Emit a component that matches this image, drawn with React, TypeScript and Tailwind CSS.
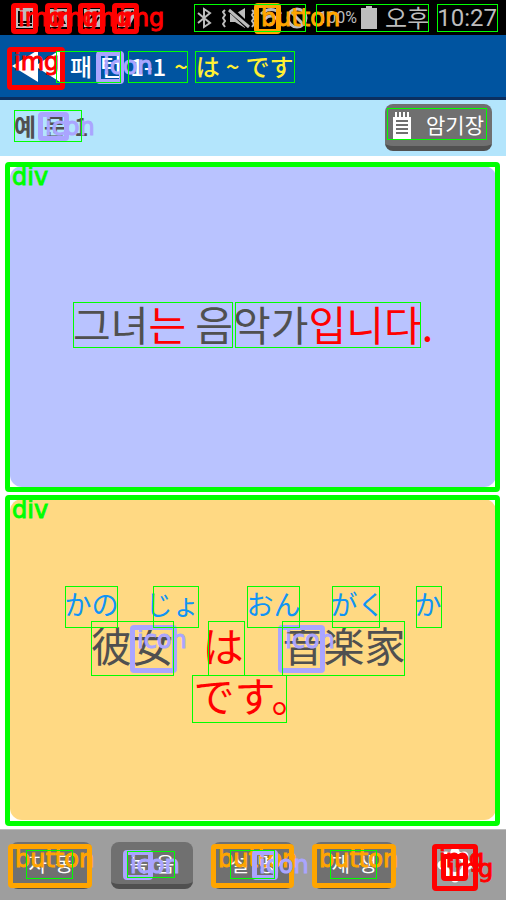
import type { ReactNode } from "react";

type Box = { x: number; y: number; w: number; h: number };
type Kind = "img" | "icon" | "button" | "div";

const MARKS: (Box & { kind: Kind })[] = [
  { kind: "div", x: 5, y: 162, w: 495, h: 330 },
  { kind: "div", x: 5, y: 495, w: 495, h: 331 },
  { kind: "button", x: 254, y: 3, w: 27, h: 31 },
  { kind: "button", x: 8, y: 844, w: 84, h: 44 },
  { kind: "button", x: 211, y: 844, w: 83, h: 44 },
  { kind: "button", x: 312, y: 844, w: 84, h: 44 },
  { kind: "img", x: 11, y: 3, w: 27, h: 31 },
  { kind: "img", x: 45, y: 3, w: 27, h: 31 },
  { kind: "img", x: 78, y: 3, w: 27, h: 31 },
  { kind: "img", x: 112, y: 3, w: 27, h: 31 },
  { kind: "img", x: 7, y: 47, w: 58, h: 43 },
  { kind: "img", x: 432, y: 844, w: 46, h: 47 },
  { kind: "img", x: 441, y: 854, w: 27, h: 27 },
  { kind: "icon", x: 96, y: 51, w: 28, h: 33 },
  { kind: "icon", x: 38, y: 112, w: 31, h: 29 },
  { kind: "icon", x: 130, y: 625, w: 47, h: 48 },
  { kind: "icon", x: 278, y: 625, w: 47, h: 48 },
  { kind: "icon", x: 123, y: 850, w: 30, h: 30 },
  { kind: "icon", x: 252, y: 850, w: 26, h: 30 },
];

const TEXT_BOUNDS: [number, number, number, number][] = [
  [194, 4, 306, 32], [316, 4, 429, 32], [437, 4, 498, 32],
  [56, 51, 121, 83], [128, 51, 188, 83], [195, 51, 295, 83],
  [14, 110, 82, 142], [387, 108, 487, 140],
  [73, 302, 233, 348], [235, 302, 421, 348],
  [65, 586, 118, 628], [153, 586, 199, 628], [247, 586, 300, 628],
  [332, 586, 380, 628], [416, 586, 442, 628],
  [91, 621, 174, 676], [208, 621, 245, 676], [282, 621, 405, 676],
  [192, 675, 287, 723],
  [26, 850, 73, 879], [127, 851, 175, 878], [230, 850, 275, 879], [330, 850, 377, 879],
];

const MARK_STYLE: Record<Kind, string> = {
  img: "border-[#ff0000] text-[#ff0000]",
  icon: "border-[#aaa5ff] text-[#aaa5ff]",
  button: "border-[#ffa500] text-[#ffa500]",
  div: "border-[#00ff00] text-[#00ff00]",
};

function Annotations() {
  return (
    <div className="pointer-events-none absolute inset-0 overflow-hidden">
      {MARKS.map((m, i) => (
        <div
          key={i}
          className={`absolute rounded-[4px] border-5 ${MARK_STYLE[m.kind]}`}
          style={{ left: m.x, top: m.y, width: m.w, height: m.h }}
        >
          <span className="absolute top-0 left-0 pl-[2px] font-['DejaVu_Sans',sans-serif] text-2xl leading-5 [-webkit-text-stroke:1px_currentColor]">
            {m.kind}
          </span>
        </div>
      ))}
      {TEXT_BOUNDS.map(([l, t, r, b], i) => (
        <div
          key={i}
          className="absolute border border-[#00ff00]"
          style={{ left: l, top: t, width: r - l, height: b - t }}
        />
      ))}
    </div>
  );
}

function StatusBar() {
  return (
    <div className="flex h-[35px] items-center bg-black pr-[9px] pl-4 text-[#bdbdbd]">
      <div className="flex gap-4">
        <svg width="18" height="20" viewBox="0 0 18 20">
          <path fill="currentColor" d="M0 0h18v20H0z" />
          <path stroke="#000" strokeWidth="2" fill="none" d="M3 3v11h12V3M2 17h14" />
        </svg>
        <svg width="18" height="20" viewBox="0 0 18 20">
          <path fill="currentColor" d="M0 1h18v18H0z" />
          <path fill="#000" d="M2 16l5-8 4 5 2-3 3 6z" />
          <circle cx="13" cy="5" r="2" fill="#000" />
        </svg>
        <svg width="18" height="20" viewBox="0 0 18 20">
          <path fill="currentColor" d="M0 1h18v18H0z" />
          <path stroke="#000" strokeWidth="2" fill="none" d="M3 13L14 3M3 17h5M10 17l5-8" />
        </svg>
        <svg width="18" height="20" viewBox="0 0 18 20">
          <path fill="currentColor" d="M7 1h11v5l-7 13H0V9z" />
          <path stroke="#000" strokeWidth="2" fill="none" d="M4 14L15 3" />
        </svg>
      </div>
      <div className="ml-auto flex items-center">
        <svg width="15" height="22" viewBox="0 0 15 22" className="mr-[10px]" fill="none" stroke="currentColor" strokeWidth="2">
          <path d="M1 6l12 10-6 4V2l6 4L1 16" />
        </svg>
        <svg width="34" height="22" viewBox="0 0 34 22" className="mr-1" fill="none" stroke="currentColor" strokeWidth="2">
          <path fill="currentColor" stroke="none" d="M8 7h5l10-6v20l-10-6H8z" />
          <path stroke="#000" strokeWidth="6" d="M7 1l20 19" />
          <path strokeWidth="3" d="M7 3l20 17" />
          <path strokeWidth="2" d="M3 3l-2 2 2 3-2 3 2 3-2 3 2 3M30 3l2 2-2 3 2 3-2 3 2 3-2 3" />
        </svg>
        <svg width="22" height="22" viewBox="0 0 22 22" className="mr-1" fill="none" stroke="currentColor" strokeWidth="3">
          <path d="M1 7q10-9 20 0M5 12q6-6 12 0" />
          <circle cx="11" cy="17" r="2" fill="currentColor" stroke="none" />
        </svg>
        <svg width="22" height="22" viewBox="0 0 22 22" className="mr-[10px]" fill="none" stroke="currentColor" strokeWidth="3">
          <circle cx="11" cy="11" r="9" />
          <path d="M5 5l12 12" />
        </svg>
        <span className="mr-1 font-[Roboto,sans-serif] text-base">100%</span>
        <svg width="16" height="23" viewBox="0 0 16 23" className="mr-2" fill="currentColor">
          <path d="M5 0h6v2h5v21H0V2h5z" />
        </svg>
        <span className="mr-2 pb-[2px] text-2xl">오후</span>
        <span className="font-[Roboto,sans-serif] text-2xl">10:27</span>
      </div>
    </div>
  );
}

function PadButton({ children }: { children: ReactNode }) {
  return (
    <button className="flex h-[47px] w-[82px] justify-center gap-2 rounded-lg border-b-5 border-[#505050] bg-[#707070] pt-1 text-xl leading-9 text-white">
      {children}
    </button>
  );
}

const ACTIONS = [
  ["자", "동"],
  ["녹", "음"],
  ["설", "명"],
  ["재", "생"],
];

function Kana({ text }: { text: string[] }) {
  return (
    <span className="flex justify-between text-[27px] leading-[30px] text-[#1094f5]">
      {text.map((t) => (
        <span key={t}>{t}</span>
      ))}
    </span>
  );
}

export default function App() {
  return (
    <div className="relative flex min-h-screen flex-col bg-white font-['Noto_Sans_CJK_KR','Noto_Sans_CJK_JP',sans-serif]">
      <StatusBar />
      <header className="flex h-[65px] items-center border-b-3 border-[#0b2f60] bg-[#0054a0] pl-3 text-2xl font-medium text-white">
        <button aria-label="뒤로" className="mr-[10px]">
          <svg width="48" height="34" viewBox="0 0 48 34" fill="#fff">
            <path d="M0 17L26 1v14L48 1v32L26 19v14z" />
          </svg>
        </button>
        <h1 className="flex gap-2">
          <span>패</span>
          <span>턴</span>
          <span>1-1</span>
          <span className="flex gap-2 font-['Noto_Sans_CJK_JP',sans-serif] text-[#fff033]">
            <span>~</span>
            <span className="flex gap-[6px]">
              <span>は</span>
              <span>~</span>
              <span>です</span>
            </span>
          </span>
        </h1>
      </header>
      <div className="flex h-14 items-center justify-between bg-[#b3e5fc] pr-[14px] pb-px pl-[14px]">
        <h2 className="flex gap-2 pb-1 text-2xl font-bold text-[#505050]">
          <span>예</span>
          <span>문</span>
          <span>1</span>
        </h2>
        <button className="flex h-[47px] w-[107px] items-start rounded-lg border-b-5 border-[#505050] bg-[#707070] pt-1 pl-2 text-[21px] leading-8 text-white">
          <svg width="18" height="28" viewBox="0 0 18 28" className="mt-1 mr-[15px] shrink-0">
            <path fill="#fff" d="M0 5h18v22H0z" />
            <path stroke="#fff" strokeWidth="2" d="M3 0v6M7 0v6M11 0v6M15 0v6" />
            <path stroke="#707070" strokeWidth="2" d="M3 9h12M3 13h12M3 17h12M3 21h12" />
          </svg>
          암기장
        </button>
      </div>
      <main className="grid flex-1 auto-rows-fr gap-3 px-[10px] pt-[10px] pb-[9px]">
        <section className="flex items-center justify-center rounded-xl bg-[#b9c3ff] pb-2">
          <p className="text-[41px] leading-[60px] text-[#505050]">
            그녀<span className="text-[#ff0000]">는</span> 음악가
            <span className="text-[#ff0000]">입니다.</span>
          </p>
        </section>
        <section
          lang="ja"
          className="flex flex-col items-center justify-center rounded-xl bg-[#ffd983] pb-3 font-['Noto_Sans_CJK_JP',sans-serif] text-[41px] leading-[50px] text-[#505050]"
        >
          <div className="flex items-end">
            <div className="flex w-[135px] flex-col text-center">
              <Kana text={["かの", "じょ"]} />
              <span>彼女</span>
            </div>
            <span className="mx-[3px] text-[#ff0000]">は</span>
            <div className="flex w-[195px] flex-col text-center">
              <Kana text={["おん", "がく", "か"]} />
              <span>音楽家</span>
            </div>
          </div>
          <span className="text-[#ff0000]">です。</span>
        </section>
      </main>
      <footer className="flex h-[71px] items-center border-t border-[#bdbdbd] bg-[#9e9e9e] pr-7 pl-[10px]">
        <div className="flex gap-[19px]">
          {ACTIONS.map(([a, b]) => (
            <PadButton key={a}>
              <span>{a}</span>
              <span>{b}</span>
            </PadButton>
          ))}
        </div>
        <button aria-label="설정" className="ml-auto flex size-[46px] items-center justify-center">
          <svg width="36" height="36" viewBox="0 0 36 36">
            <circle cx="18" cy="18" r="14" fill="#fff" />
            <path stroke="#fff" strokeWidth="9" strokeLinecap="round" d="M18 5v26M5 18h26M9 9l18 18M27 9L9 27" />
            <circle cx="18" cy="18" r="7" fill="#9e9e9e" />
          </svg>
        </button>
      </footer>
      <Annotations />
    </div>
  );
}
